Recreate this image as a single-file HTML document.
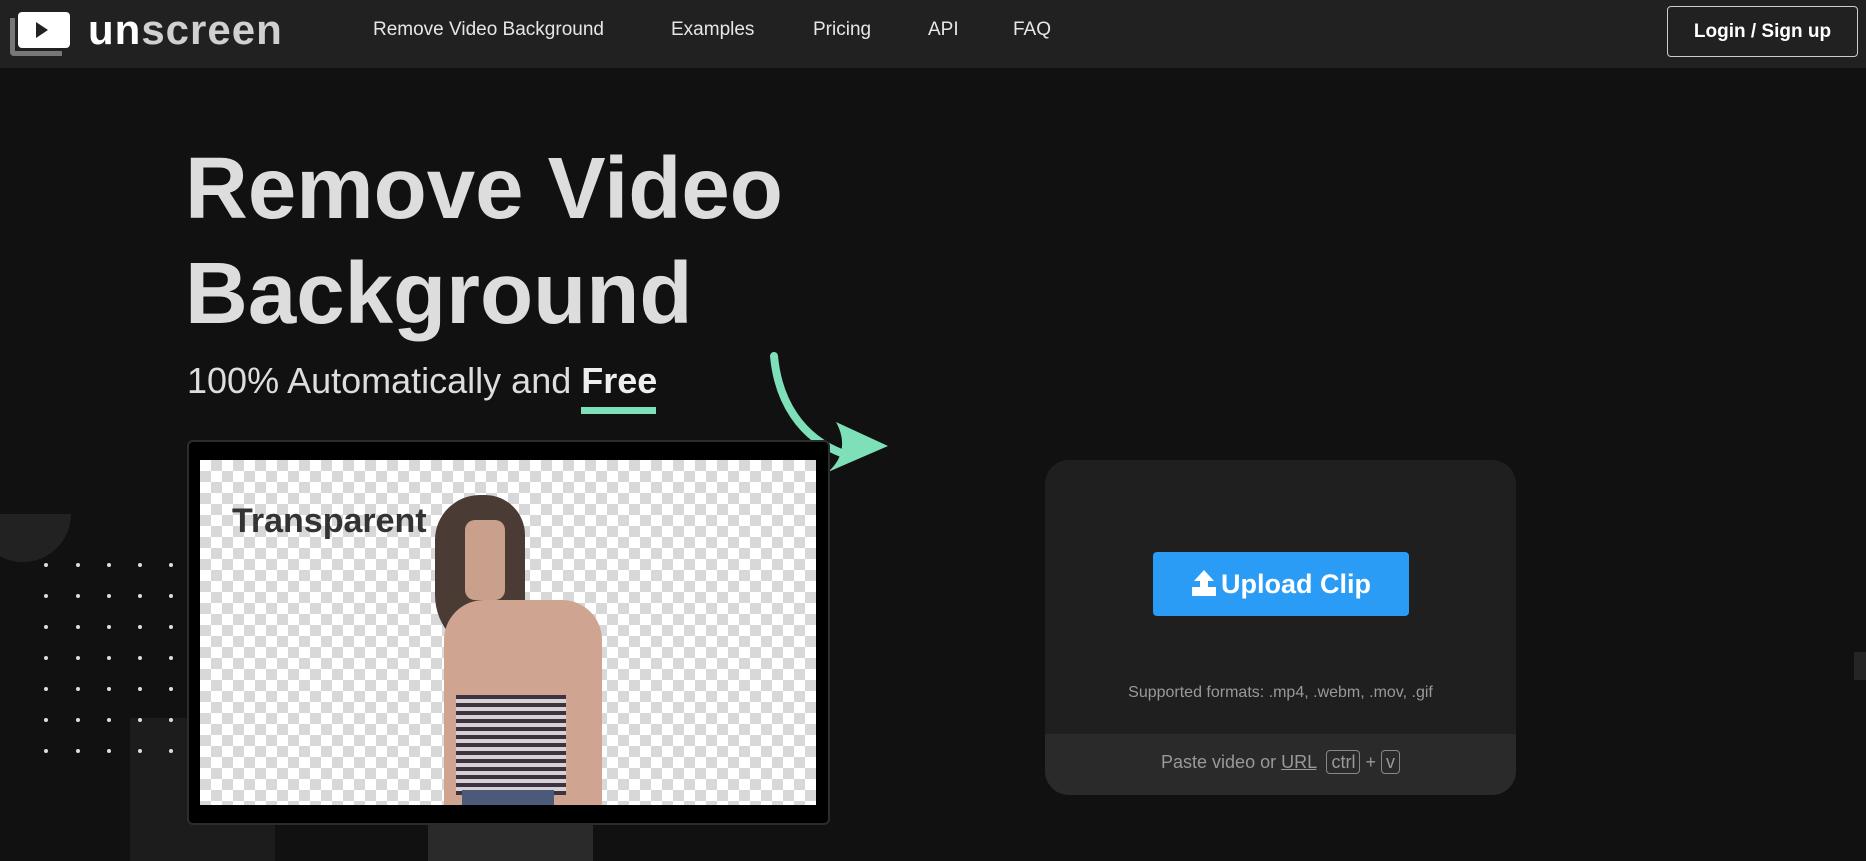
<!DOCTYPE html>
<html><head><meta charset="utf-8"><style>
*{margin:0;padding:0;box-sizing:border-box}
body{width:1866px;height:861px;overflow:hidden;background:#111;font-family:"Liberation Sans",sans-serif;position:relative}
.nav{position:absolute;left:0;top:0;width:1866px;height:68px;background:#212121}
.nav a{position:absolute;top:19px;color:#e6e6e6;font-size:19px;text-decoration:none}
.abs{position:absolute}
.dot{position:absolute;width:4px;height:4px;border-radius:2px;background:#ddd}
.checker{background-color:#fff;background-image:linear-gradient(45deg,#d8d8d8 25%,transparent 25%,transparent 75%,#d8d8d8 75%),linear-gradient(45deg,#d8d8d8 25%,transparent 25%,transparent 75%,#d8d8d8 75%);background-size:22px 22px;background-position:0 0,11px 11px}
</style></head><body>
<div class="nav">
  <div class="abs" style="left:10px;top:18px;width:52px;height:38px;border:5px solid #777;border-top:none;border-right:none;border-radius:0 0 0 4px;"></div>
  <div class="abs" style="left:18px;top:12px;width:52px;height:36px;background:#fff;border-radius:4px"></div>
  <svg class="abs" style="left:34px;top:21px" width="16" height="18"><path d="M2 1 L14 9 L2 17Z" fill="#222"/></svg>
  <div class="abs" style="left:88px;top:6px;font-size:42px;font-weight:bold;color:#fff;letter-spacing:1px">un<span style="color:#d0d0d0">screen</span></div>
  <a style="left:373px">Remove Video Background</a>
  <a style="left:671px">Examples</a>
  <a style="left:813px">Pricing</a>
  <a style="left:928px">API</a>
  <a style="left:1013px">FAQ</a>
  <div class="abs" style="left:1667px;top:6px;width:191px;height:51px;border:1px solid #ccc;border-radius:4px;color:#fff;font-weight:bold;font-size:19px;text-align:center;line-height:49px">Login / Sign up</div>
</div>
<div class="abs" style="left:-25px;top:466px;width:96px;height:96px;border-radius:50%;background:#222;clip-path:inset(48px 0 0 0)"></div>
<div class="abs" style="left:130px;top:718px;width:145px;height:143px;background:#1c1c1c"></div>
<div id="dots"></div>
<div class="abs" style="left:185px;top:136px;font-size:87px;font-weight:bold;color:#ddd;line-height:105px">Remove Video<br>Background</div>
<div class="abs" style="left:187px;top:360px;font-size:36px;color:#ddd">100% Automatically and <b style="color:#eee">Free</b></div>
<div class="abs" style="left:581px;top:407px;width:75px;height:7px;background:#7de0b8"></div>
<svg class="abs" style="left:760px;top:350px" width="140" height="130"><path d="M14 6 C18 50 40 88 84 104" stroke="#7de0b8" stroke-width="8" fill="none" stroke-linecap="round"/><path d="M76 72 L128 96 L68 122 C84 108 86 90 76 72Z" fill="#7de0b8"/></svg>
<div class="abs" style="left:428px;top:820px;width:165px;height:41px;background:#2a2a2a"></div>
<div class="abs" style="left:187px;top:440px;width:643px;height:385px;background:#000;border:2px solid #2c2c2c;border-radius:6px"></div>
<div class="abs checker" style="left:200px;top:460px;width:616px;height:345px;overflow:hidden">
  <div class="abs" style="left:32px;top:42px;font-size:34px;font-weight:bold;color:#333">Transparent</div>
  <div class="abs" style="left:235px;top:35px;width:90px;height:160px;background:#4a3b35;border-radius:45px 40px 20px 60px"></div>
  <div class="abs" style="left:265px;top:60px;width:40px;height:80px;background:#c9a08c;border-radius:10px"></div>
  <div class="abs" style="left:244px;top:140px;width:158px;height:205px;background:#cfa490;border-radius:40px 40px 0 0"></div>
  <div class="abs" style="left:256px;top:235px;width:110px;height:100px;background:repeating-linear-gradient(#3b3340 0 4px,#d9d0d3 4px 8px)"></div>
  <div class="abs" style="left:262px;top:330px;width:92px;height:15px;background:#4a5a78"></div>
</div>
<div class="abs" style="left:1045px;top:460px;width:471px;height:335px;background:#1f1f1f;border-radius:24px;overflow:hidden">
  <div class="abs" style="left:0;top:274px;width:471px;height:61px;background:#2a2a2a"></div>
  <div class="abs" style="left:108px;top:92px;width:256px;height:64px;background:#2a9cf5;border-radius:4px;color:#fff;font-weight:bold;font-size:27px;line-height:64px;text-align:center">
    <svg width="26" height="28" style="vertical-align:-4px;margin-right:4px"><path d="M13 1 L23 12 L17 12 L17 20 L9 20 L9 12 L3 12Z" fill="#fff"/><rect x="1" y="18" width="24" height="9" fill="#fff"/></svg>Upload Clip</div>
  <div class="abs" style="left:0;top:224px;width:471px;text-align:center;color:#999;font-size:16px">Supported formats: .mp4, .webm, .mov, .gif</div>
  <div class="abs" style="left:0;top:292px;width:471px;text-align:center;color:#999;font-size:18px">Paste video or <u>URL</u> &nbsp;<span style="border:1px solid #888;border-radius:4px;padding:1px 4px">ctrl</span> + <span style="border:1px solid #888;border-radius:4px;padding:1px 4px">v</span></div>
</div>
<div class="abs" style="left:1854px;top:652px;width:12px;height:28px;background:#252525"></div>
<script>
var h='';[46,78,109,140,171].forEach(function(x){[565,596,627,658,689,720,751].forEach(function(y){h+='<div class="dot" style="left:'+(x-2)+'px;top:'+(y-2)+'px"></div>'})});document.getElementById('dots').innerHTML=h;
</script>
</body></html>
